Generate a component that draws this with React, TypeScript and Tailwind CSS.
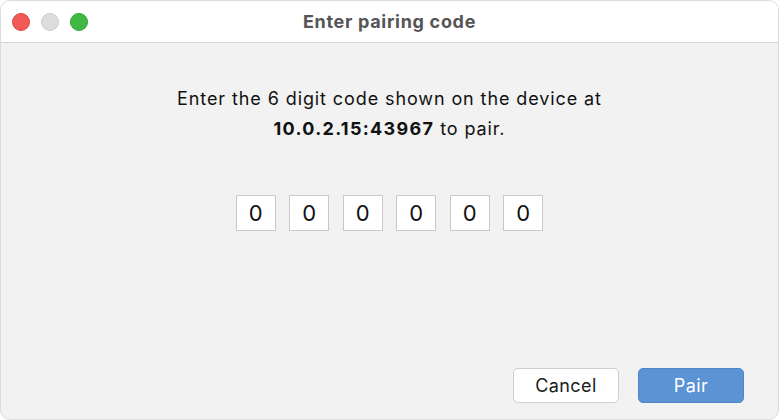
import React from 'react';

const App: React.FC = () => {
  const digits = ['0', '0', '0', '0', '0', '0'];

  return (
    <div className="w-[779px] h-[420px] bg-white" style={{ fontFamily: 'Inter, "Liberation Sans", sans-serif' }}>
      <div className="w-full h-full rounded-[10px] border border-[#dcdcdc] overflow-hidden flex flex-col bg-[#f2f2f2]">
        {/* Title bar */}
        <div className="h-[42px] shrink-0 bg-white border-b border-[#d6d6d6] flex items-center relative">
          <div className="flex items-center gap-[11px] pl-[11px]">
            <span className="w-[18px] h-[18px] rounded-full bg-[#f25a55] border border-[#e0443f]"></span>
            <span className="w-[18px] h-[18px] rounded-full bg-[#dddddd] border border-[#cdcdcd]"></span>
            <span className="w-[18px] h-[18px] rounded-full bg-[#3fb844] border border-[#33a437]"></span>
          </div>
          <div className="absolute inset-0 flex items-center justify-center text-[18px] tracking-[0.7px] font-bold text-[#555555]">
            Enter pairing code
          </div>
        </div>

        {/* Body */}
        <div className="flex-1 flex flex-col">
          <div className="pt-[41px] text-center text-[18px] tracking-[0.9px] leading-[30px] text-[#111111]">
            <div>Enter the 6 digit code shown on the device at</div>
            <div>
              <span className="font-bold tracking-[1.3px]">10.0.2.15:43967</span> to pair.
            </div>
          </div>

          <div className="mt-[51px] flex justify-center gap-[13.5px]">
            {digits.map((d, i) => (
              <div
                key={i}
                className="w-[40px] h-[36px] bg-white border-[1.5px] border-[#c9c9c9] flex items-center justify-center text-[22px] text-[#111]"
              >
                {d}
              </div>
            ))}
          </div>

          <div className="mt-auto mb-[16px] flex justify-end gap-[19px] pr-[34px]">
            <button className="w-[106px] h-[35px] rounded-[5px] bg-white border border-[#cfcfcf] text-[18px] tracking-[0.4px] text-[#1a1a1a]">
              Cancel
            </button>
            <button className="w-[106px] h-[35px] rounded-[5px] bg-[#5c93d4] border border-[#4f87c9] text-[18px] tracking-[0.4px] text-white">
              Pair
            </button>
          </div>
        </div>
      </div>
    </div>
  );
};

export default App;
